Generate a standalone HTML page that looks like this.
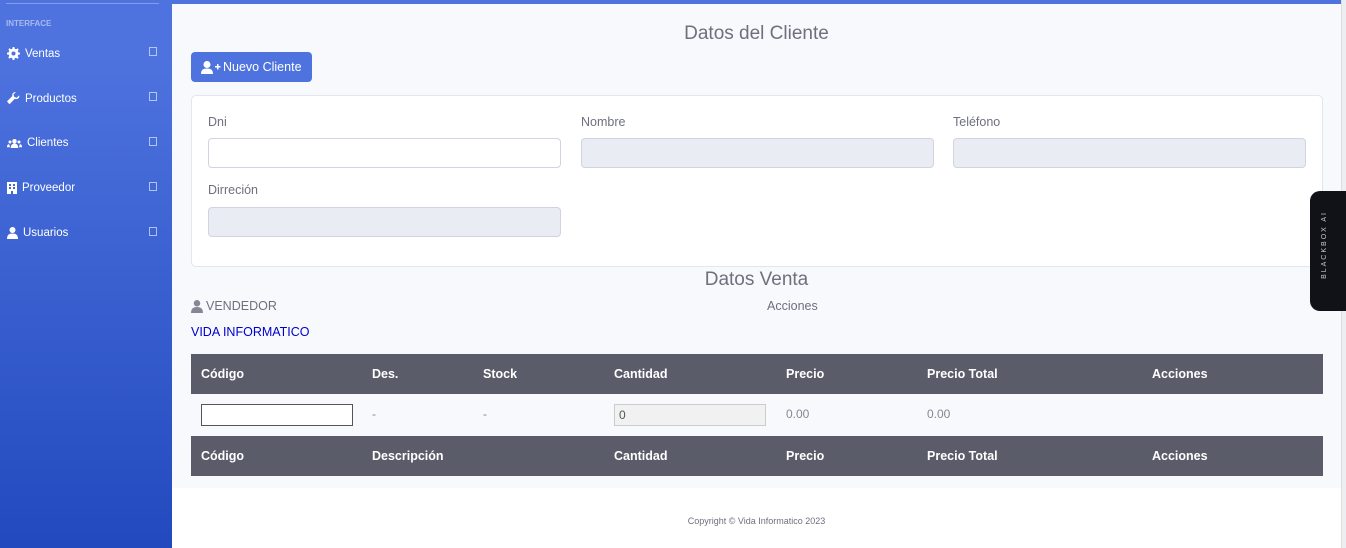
<!DOCTYPE html>
<html><head><meta charset="utf-8"><style>
*{box-sizing:border-box;margin:0;padding:0}
body{width:1346px;height:548px;overflow:hidden;position:relative;font-family:"Liberation Sans",sans-serif;background:#f8f9fc;color:#858796}
.a{position:absolute}
#side{left:0;top:0;width:172px;height:548px;background:linear-gradient(180deg,#4e73df 10%,#224abe 100%)}
.nav{position:absolute;left:7px;color:#fff;font-size:11.5px;display:flex;align-items:center;gap:5px}
.nav svg{fill:#fff}
.sq{position:absolute;left:149px;width:8px;height:9px;border:1px solid rgba(255,255,255,.6)}
label{position:absolute;font-size:12.5px;color:#6e707e}
.inp{position:absolute;height:30px;border:1px solid #d1d3e2;border-radius:4px;background:#eaecf4}
.row{position:absolute;left:191px;width:1132px;height:40px;background:#5a5c69}
.row span,.r2 span{position:absolute;top:13px;font-size:12.5px;font-weight:bold;color:#fff}
.r2 span{font-weight:normal;color:#858796;font-size:12px}
</style></head><body>
<div id="side" class="a">
<div class="a" style="left:6px;top:3px;width:153px;height:1px;background:rgba(255,255,255,.3)"></div>
<div class="a" style="left:6px;top:19px;font-size:8px;font-weight:bold;color:rgba(255,255,255,.5)">INTERFACE</div>
<div class="nav" style="top:47px"><svg width="13" height="13" viewBox="0 0 16 16"><path d="M7 0h2l.5 2.2 1.6.7 1.9-1.2 1.4 1.4-1.2 1.9.7 1.6L16 7v2l-2.2.5-.7 1.6 1.2 1.9-1.4 1.4-1.9-1.2-1.6.7L9 16H7l-.5-2.2-1.6-.7-1.9 1.2-1.4-1.4 1.2-1.9-.7-1.6L0 9V7l2.2-.5.7-1.6-1.2-1.9 1.4-1.4 1.9 1.2 1.6-.7zM8 5.5a2.5 2.5 0 100 5 2.5 2.5 0 000-5z"/></svg>Ventas</div><div class="sq" style="top:47px"></div>
<div class="nav" style="top:92px"><svg width="13" height="13" viewBox="0 0 16 16"><path d="M15 4l-3 3-3-1-1-3 3-3C8 0 6 2 6.5 5L0 11.5 3 15l6.5-6.5C12 9.5 16 8 15 4z"/></svg>Productos</div><div class="sq" style="top:92px"></div>
<div class="nav" style="top:137px"><svg width="15" height="11" viewBox="0 0 20 14"><circle cx="10" cy="4" r="3"/><circle cx="4" cy="5" r="2"/><circle cx="16" cy="5" r="2"/><path d="M5 13c0-4 2-6 5-6s5 2 5 6zM0 12c0-3 1-4 3-4l1 4zM20 12c0-3-1-4-3-4l-1 4z"/></svg>Clientes</div><div class="sq" style="top:137px"></div>
<div class="nav" style="top:182px"><svg width="10" height="12" viewBox="0 0 10 12"><path d="M0 0h10v12H6V9H4v3H0zM2 2v2h2V2zm4 0v2h2V2zM2 5v2h2V5zm4 0v2h2V5z"/></svg>Proveedor</div><div class="sq" style="top:182px"></div>
<div class="nav" style="top:227px"><svg width="11" height="12" viewBox="0 0 11 12"><circle cx="5.5" cy="3" r="3"/><path d="M0 12c0-4 2-5.5 5.5-5.5S11 8 11 12z"/></svg>Usuarios</div><div class="sq" style="top:227px"></div>
</div>
<div class="a" style="left:172px;top:0;width:1169px;height:4px;background:#4e73df"></div>
<div class="a" style="left:1341px;top:0;width:5px;height:548px;background:#eceef2;border-left:1px solid #ddd"></div>
<div class="a" style="left:172px;width:1169px;text-align:center;top:23px;font-size:19px;color:#6e707e">Datos del Cliente</div>
<div class="a" style="left:191px;top:52px;width:121px;height:30px;background:#4e73df;border-radius:4px;color:#fff;font-size:12.5px;line-height:30px;padding-left:10px;display:flex;align-items:center;gap:2px"><svg width="20" height="13" viewBox="0 0 20 13" fill="#fff"><circle cx="6" cy="3.5" r="3.5"/><path d="M0 13c0-4 2-5.5 6-5.5s6 1.5 6 5.5zM14 5h2V3h1.5v2h2v1.5h-2v2H16v-2h-2z"/></svg>Nuevo Cliente</div>
<div class="a" style="left:191px;top:95px;width:1132px;height:172px;background:#fff;border:1px solid #e3e6f0;border-radius:5px"></div>
<label style="left:208px;top:115px">Dni</label>
<label style="left:581px;top:115px">Nombre</label>
<label style="left:953px;top:115px">Teléfono</label>
<label style="left:208px;top:183px">Dirreción</label>
<div class="inp" style="left:208px;top:138px;width:353px;background:#fff"></div>
<div class="inp" style="left:581px;top:138px;width:353px"></div>
<div class="inp" style="left:953px;top:138px;width:353px"></div>
<div class="inp" style="left:208px;top:207px;width:353px"></div>
<div class="a" style="left:172px;width:1169px;top:269px;text-align:center;font-size:19px;color:#6e707e">Datos Venta</div>
<div class="a" style="left:191px;top:299px;font-size:12.5px;color:#6e707e;display:flex;align-items:center;gap:3px"><svg width="12" height="13" viewBox="0 0 11 12" fill="#858796"><circle cx="5.5" cy="3" r="3"/><path d="M0 12c0-4 2-5.5 5.5-5.5S11 8 11 12z"/></svg>VENDEDOR</div>
<div class="a" style="left:767px;top:299px;font-size:12.5px;color:#6e707e">Acciones</div>
<div class="a" style="left:191px;top:325px;font-size:12.5px;color:#0000cc">VIDA INFORMATICO</div>
<div class="row" style="top:354px"><span style="left:10px">Código</span><span style="left:181px">Des.</span><span style="left:292px">Stock</span><span style="left:423px">Cantidad</span><span style="left:595px">Precio</span><span style="left:736px">Precio Total</span><span style="left:961px">Acciones</span></div>
<div class="r2 a" style="left:191px;top:394px;width:1132px;height:42px">
<div class="a" style="left:10px;top:10px;width:152px;height:22px;border:1px solid #555;background:#fff"></div>
<span style="left:181px">-</span><span style="left:292px">-</span>
<div class="a" style="left:423px;top:10px;width:152px;height:22px;border:1px solid #ccc;background:#f1f1f1;font-size:12px;padding:3px 4px;color:#555">0</div>
<span style="left:595px">0.00</span><span style="left:736px">0.00</span></div>
<div class="row" style="top:436px"><span style="left:10px">Código</span><span style="left:181px">Descripción</span><span style="left:423px">Cantidad</span><span style="left:595px">Precio</span><span style="left:736px">Precio Total</span><span style="left:961px">Acciones</span></div>
<div class="a" style="left:172px;top:488px;width:1169px;height:60px;background:#fff;text-align:center;font-size:9px;padding-top:28px;color:#6e707e">Copyright © Vida Informatico 2023</div>
<div class="a" style="left:1310px;top:191px;width:36px;height:120px;background:#111218;border-radius:10px 0 0 10px"><div class="a" style="left:11px;top:20px;writing-mode:vertical-rl;transform:rotate(180deg);font-size:7px;letter-spacing:2px;color:#ccc">BLACKBOX AI</div></div>
</body></html>
